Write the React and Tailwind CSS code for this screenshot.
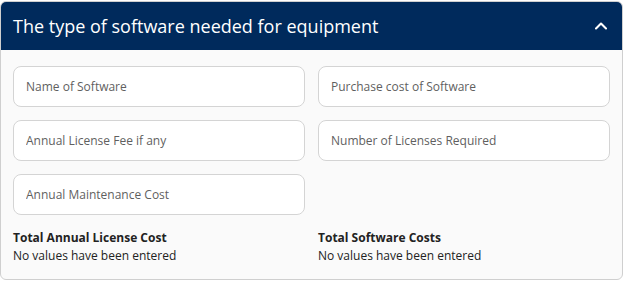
import React from 'react';
import { ChevronUp } from 'lucide-react';

const Field = ({ placeholder }) => (
    <input
        type="text"
        placeholder={placeholder}
        className="h-[41px] w-full rounded-lg border border-[#d4d4d4] bg-white px-3 text-[12px] text-[#333] placeholder:text-[#5f5f5f] outline-none"
    />
);

const Total = ({ label }) => (
    <div className="text-[12px] leading-[18px] text-[#222]">
        <div className="font-bold">{label}</div>
        <div>No values have been entered</div>
    </div>
);

const App = () => {
    return (
        <div className="pt-px" style={{ fontFamily: '"Open Sans", "Noto Sans", sans-serif' }}>
            <div className="w-[623px] h-[279px] overflow-hidden rounded-md border border-[#cfcfcf] bg-[#fafafa]">
                <div className="flex h-[48px] items-center justify-between bg-[#002a5c] pl-3 pr-[11px]">
                    <h2 className="text-[18px] text-white">The type of software needed for equipment</h2>
                    <ChevronUp className="h-5 w-5 text-white" strokeWidth={2.5} />
                </div>
                <div className="px-3 pt-4">
                    <div className="grid grid-cols-2 gap-x-[13px] gap-y-[13px]">
                        <Field placeholder="Name of Software" />
                        <Field placeholder="Purchase cost of Software" />
                        <Field placeholder="Annual License Fee if any" />
                        <Field placeholder="Number of Licenses Required" />
                        <Field placeholder="Annual Maintenance Cost" />
                    </div>
                    <div className="mt-[14px] grid grid-cols-2 gap-x-[13px]">
                        <Total label="Total Annual License Cost" />
                        <Total label="Total Software Costs" />
                    </div>
                </div>
            </div>
        </div>
    );
};

export default App;
